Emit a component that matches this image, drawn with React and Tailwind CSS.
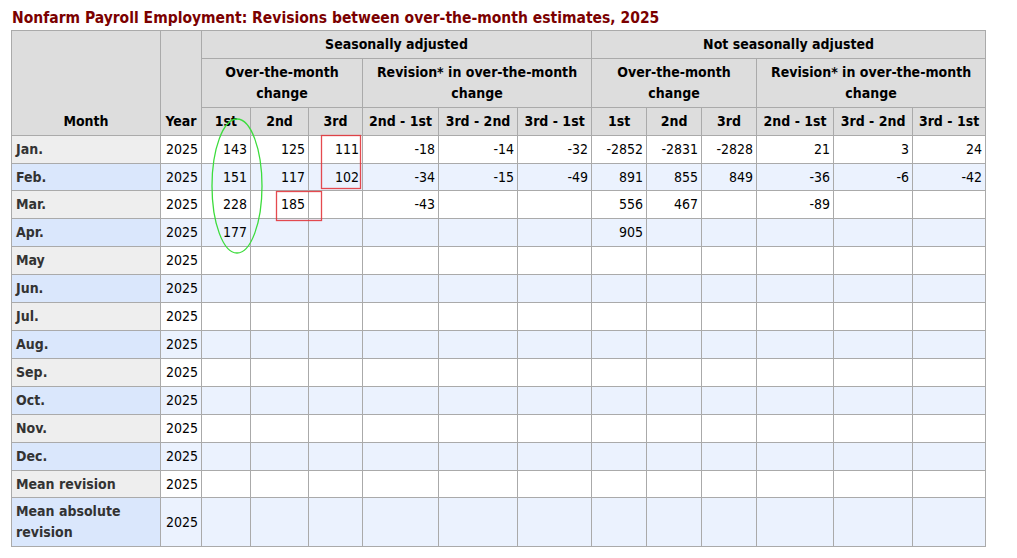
import React from "react";

const COLS = [149, 41, 49, 58, 54, 76, 79, 74, 55, 55, 55, 77, 79, 73];

const ROWS = [
  { month: "Jan.", values: ["143", "125", "111", "-18", "-14", "-32", "-2852", "-2831", "-2828", "21", "3", "24"] },
  { month: "Feb.", values: ["151", "117", "102", "-34", "-15", "-49", "891", "855", "849", "-36", "-6", "-42"] },
  { month: "Mar.", values: ["228", "185", "", "-43", "", "", "556", "467", "", "-89", "", ""] },
  { month: "Apr.", values: ["177", "", "", "", "", "", "905", "", "", "", "", ""] },
  { month: "May" },
  { month: "Jun." },
  { month: "Jul." },
  { month: "Aug." },
  { month: "Sep." },
  { month: "Oct." },
  { month: "Nov." },
  { month: "Dec." },
  { month: "Mean revision" },
  { month: "Mean absolute revision" },
];

const SUB = ["1st", "2nd", "3rd", "2nd - 1st", "3rd - 2nd", "3rd - 1st"];

const th = "border border-[#aaaaaa] bg-[#dddddd] font-bold text-black text-center px-[3px] py-[3px]";
const td = "border border-[#aaaaaa] text-right pr-[3px] py-[3px] text-black";

function Annotations() {
  return (
    <svg
      className="absolute left-0 top-0 pointer-events-none"
      width="1017"
      height="558"
      viewBox="0 0 1017 558"
    >
      <ellipse cx="237" cy="186" rx="25" ry="67" fill="none" stroke="#3cdc3c" strokeWidth="1.3" />
      <rect x="321.5" y="135.5" width="39" height="53" fill="none" stroke="#e2363c" strokeWidth="1.3" strokeOpacity="0.9" />
      <rect x="276.5" y="191.5" width="45" height="29" fill="none" stroke="#e2363c" strokeWidth="1.3" strokeOpacity="0.9" />
    </svg>
  );
}

export default function App() {
  return (
    <div
      className="relative w-[1017px] h-[558px] bg-white pl-[11px] text-[14px] leading-[20.9px]"
      style={{ fontFamily: '"DejaVu Sans Condensed", "DejaVu Sans", sans-serif' }}
    >
      <div className="pt-[8px] pb-[2px] pl-[1px] text-[15.5px] leading-[20px] font-bold text-[#7b0000]">
        Nonfarm Payroll Employment: Revisions between over-the-month estimates, 2025
      </div>

      <table className="table-fixed border-collapse w-[974px]">
        <colgroup>
          {COLS.map((w, i) => (
            <col key={i} style={{ width: w }} />
          ))}
        </colgroup>
        <thead>
          <tr>
            <th rowSpan={3} className={`${th} align-bottom`}>Month</th>
            <th rowSpan={3} className={`${th} align-bottom`}>Year</th>
            <th colSpan={6} className={th}>Seasonally adjusted</th>
            <th colSpan={6} className={th}>Not seasonally adjusted</th>
          </tr>
          <tr>
            <th colSpan={3} className={th}>Over-the-month change</th>
            <th colSpan={3} className={th}>Revision* in over-the-month change</th>
            <th colSpan={3} className={th}>Over-the-month change</th>
            <th colSpan={3} className={th}>Revision* in over-the-month change</th>
          </tr>
          <tr>
            {[...SUB, ...SUB].map((s, i) => (
              <th key={i} className={`${th} whitespace-nowrap`}>{s}</th>
            ))}
          </tr>
        </thead>
        <tbody>
          {ROWS.map((row, r) => {
            const even = r % 2 === 1;
            const values = row.values || Array(12).fill("");
            return (
              <tr key={row.month} className={even ? "bg-[#ebf2fe]" : "bg-white"}>
                <td
                  className={`border border-[#aaaaaa] text-left pl-[4px] py-[3px] font-bold text-[#333333] ${
                    even ? "bg-[#dae7fc]" : "bg-[#eeeeee]"
                  }`}
                >
                  {row.month}
                </td>
                <td className={td}>2025</td>
                {values.map((v, i) => (
                  <td key={i} className={td}>{v}</td>
                ))}
              </tr>
            );
          })}
        </tbody>
      </table>

      <Annotations />
    </div>
  );
}
